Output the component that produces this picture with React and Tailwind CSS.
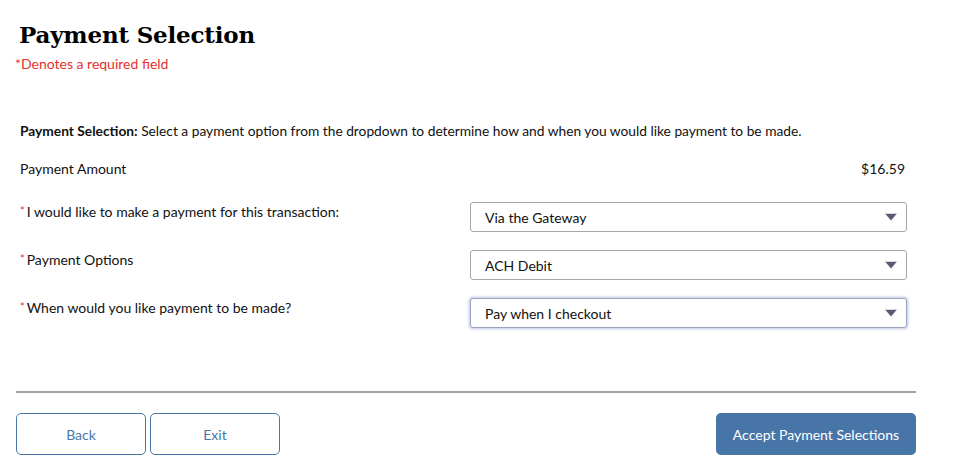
const rows = [
  { label: 'I would like to make a payment for this transaction:', value: 'Via the Gateway' },
  { label: 'Payment Options', value: 'ACH Debit' },
  { label: 'When would you like payment to be made?', value: 'Pay when I checkout', focused: true },
];

function SelectBox({ value, focused }) {
  return (
    <div
      className={`relative flex items-center h-[30px] w-[437px] rounded-[3px] border bg-white pl-[14px] text-[14px] text-[#111] ${
        focused ? 'border-[#9aa3c0] shadow-[0_0_3px_1px_rgba(110,130,190,0.45)]' : 'border-[#a8a8a8]'
      }`}
    >
      <span>{value}</span>
      <svg
        className="absolute right-[9px] top-1/2 -translate-y-1/2"
        width="12"
        height="7"
        viewBox="0 0 12 7"
        aria-hidden="true"
      >
        <path d="M0 0 H12 L6 7 Z" fill="#575c72" />
      </svg>
    </div>
  );
}

export default function App() {
  return (
    <div className="w-[969px] h-[474px] bg-white font-['Lato','Liberation_Sans',sans-serif] text-[#111] overflow-hidden">
      {/* Header */}
      <div className="pl-[19px] pt-[19px]">
        <h1 className="font-['DejaVu_Serif','Liberation_Serif',serif] font-bold text-[23px] leading-[32px] tracking-[-0.2px] text-black">
          Payment Selection
        </h1>
      </div>
      <p className="pl-[15px] mt-[4px] text-[14px] leading-[18px] text-[#e5322d]">*Denotes a required field</p>

      {/* Form */}
      <div className="mt-[49px] pl-[20px] pr-[62px]">
        <p className="text-[13.75px] leading-[18px]">
          <span className="font-bold">Payment Selection:</span> Select a payment option from the dropdown to determine how and when you would like payment to be made.
        </p>

        <div className="mt-[20px] flex items-center justify-between text-[14px] leading-[18px]">
          <span>Payment Amount</span>
          <span className="mr-[2px]">$16.59</span>
        </div>

        <div className="mt-[24px] flex flex-col gap-[18px]">
          {rows.map((r) => (
            <div key={r.label} className="flex items-start justify-between">
              <span className="text-[14px] leading-[18px]">
                <span className="text-[#e5322d] text-[11px] align-[2px] mr-[2px]">*</span>
                {r.label}
              </span>
              <SelectBox value={r.value} focused={r.focused} />
            </div>
          ))}
        </div>
      </div>

      {/* Footer */}
      <div className="mt-[63px] mx-[16px] w-[900px] h-[2px] bg-[#a3a3a3]" />
      <div className="mt-[20px] ml-[16px] w-[900px] flex items-center">
        <button className="w-[130px] h-[42px] rounded-[5px] border border-[#4a76a8] bg-white text-[14px] text-[#4a76a8]">
          Back
        </button>
        <button className="ml-[4px] w-[130px] h-[42px] rounded-[5px] border border-[#4a76a8] bg-white text-[14px] text-[#4a76a8]">
          Exit
        </button>
        <button className="ml-auto w-[200px] h-[42px] rounded-[5px] bg-[#4875a7] text-[14px] text-white">
          Accept Payment Selections
        </button>
      </div>
    </div>
  );
}
